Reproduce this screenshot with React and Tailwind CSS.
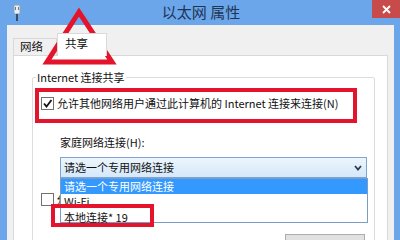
import React from "react";

const Checkbox = ({ checked }) => (
  <span className="w-[13px] h-[13px] shrink-0 border border-[#707070] bg-white flex items-center justify-center">
    {checked && (
      <svg width="11" height="11" viewBox="0 0 11 11">
        <path d="M2 5.5 L4.5 8.5 L9.5 2" fill="none" stroke="#111" strokeWidth="1.8" />
      </svg>
    )}
  </span>
);

export default function App() {
  return (
    <div className="w-[400px] h-[240px] bg-[#6ba6ea] overflow-hidden relative font-['Noto_Sans_CJK_SC',sans-serif] text-[11px] text-[#111]">
      {/* title bar */}
      <div className="h-[25px] flex items-start">
        <div className="w-[40px] pl-[13px] pt-[4px]">
          <svg width="8" height="17" viewBox="0 0 8 17">
            <rect x="1" y="1" width="6" height="9" rx="1" fill="#e8eef6" stroke="#8aa0bb" />
            <rect x="2" y="3" width="1" height="3" fill="#777" />
            <rect x="5" y="3" width="1" height="3" fill="#777" />
            <rect x="3" y="10" width="2" height="7" fill="#3b4d66" />
          </svg>
        </div>
        <div className="flex-1 text-center text-[15px] leading-[24px] text-[#1f3556] pr-[10px]">以太网 属性</div>
        <div className="w-[28px] h-[18px] bg-[#c84b4b] flex items-center justify-center">
          <svg width="9" height="9" viewBox="0 0 9 9">
            <path d="M1 1 L8 8 M8 1 L1 8" stroke="#fff" strokeWidth="1.8" />
          </svg>
        </div>
      </div>

      {/* window body */}
      <div className="ml-[7px] mr-[6px] h-[215px] bg-[#f0f0f0] pt-[8px] px-[6px] flex flex-col">
        {/* tabs */}
        <div className="h-[22px] flex items-end">
          <div className="w-[44px] h-[17px] border border-b-0 border-[#d9d9d9] bg-[#f0f0f0] text-[11.5px] leading-[15px] pl-[6px]">网络</div>
          <div className="w-[50px] h-[23px] border border-b-0 border-[#d9d9d9] bg-white text-[11.5px] leading-[18px] pl-[7px] -mb-px relative z-10">共享</div>
        </div>

        {/* panel */}
        <div className="flex-1 bg-white border border-[#d9d9d9] flex flex-col">
          <div className="relative mt-[21px] ml-[18px] mr-[12px] border border-[#dcdcdc] rounded-[2px] h-[200px]">
            <span className="absolute -top-[9px] left-[3px] bg-white px-[1px] leading-[16px]">Internet 连接共享</span>

            <div className="mt-[17px] ml-[8px] h-[16px] flex items-center gap-[3px] whitespace-nowrap">
              <Checkbox checked />
              <span>允许其他网络用户通过此计算机的 Internet 连接来连接(N)</span>
            </div>

            <div className="mt-[23px] ml-[27px] h-[16px] leading-[16px]">家庭网络连接(H):</div>

            <div className="mt-[7px] ml-[27px] mr-[7px] h-[21px] border border-[#7fa4cf] bg-gradient-to-b from-[#edf5fd] to-[#d5e8fa] flex items-center justify-between pl-[3px] pr-[4px]">
              <span>请选一个专用网络连接</span>
              <svg width="8" height="6" viewBox="0 0 8 6">
                <path d="M1 1 L4 4.5 L7 1" fill="none" stroke="#2d3b50" strokeWidth="1.8" />
              </svg>
            </div>

            <div className="mt-[13px] ml-[8px] h-[16px] flex items-center gap-[2px] whitespace-nowrap">
              <Checkbox />
              <span>允许其他网络用户控制或禁用共享的 Internet 连接(O)</span>
            </div>

            <div className="mt-[27px] mr-[9px] flex justify-end">
              <div className="w-[80px] h-[23px] border border-[#adadad] bg-[#e1e1e1]" />
            </div>

            {/* dropdown list */}
            <div className="absolute left-[27px] top-[100px] w-[308px] h-[45px] bg-white border border-[#7a9cc6] flex flex-col">
              <div className="h-[15px] bg-[#3399ff] text-white leading-[15px] pl-[3px]">请选一个专用网络连接</div>
              <div className="h-[15px] leading-[15px] pl-[3px]">Wi-Fi</div>
              <div className="h-[14px] leading-[16px] pl-[3px]">本地连接* 19</div>
            </div>
          </div>
        </div>
      </div>

      {/* annotations */}
      <div className="absolute left-[35px] top-[88px] w-[322px] h-[35px] border-[4px] border-[#e3142b]" />
      <div className="absolute left-[51px] top-[204px] w-[103px] h-[23px] border-[4px] border-[#e3142b]" />
      <svg className="absolute left-0 top-0" width="400" height="240" viewBox="0 0 400 240">
        <polygon points="79,12 47,62 112,62" fill="none" stroke="#e3142b" strokeWidth="5" />
      </svg>
    </div>
  );
}
